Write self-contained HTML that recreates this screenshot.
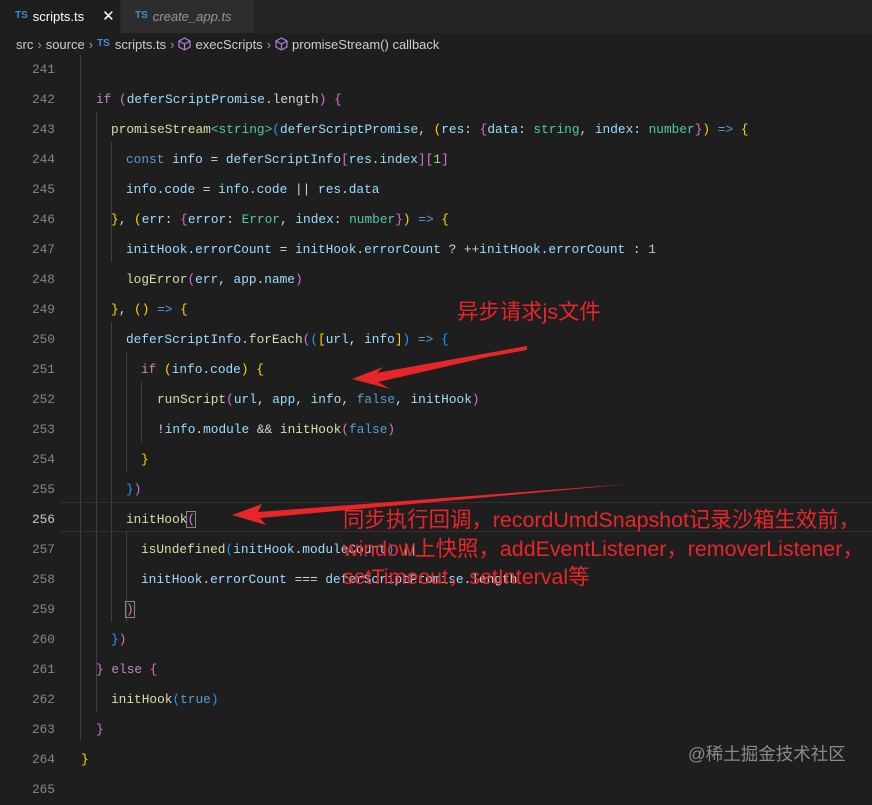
<!DOCTYPE html>
<html><head><meta charset="utf-8"><style>
body{margin:0;width:872px;height:788px;background:#1e1e1e;overflow:hidden;position:relative;font-family:"Liberation Sans","Noto Sans CJK SC",sans-serif}
.tabs{position:absolute;left:0;top:0;width:872px;height:33px;background:#252526}
.tab{position:absolute;top:0;height:33px;line-height:32px;font-size:13px}
.ts{color:#3b8ed8;font-size:10px;font-weight:bold;vertical-align:3px;margin-right:5px}
.bc{position:absolute;top:34px;left:16px;height:22px;line-height:20px;font-size:13px;color:#cccccc}
.bc .sep{color:#999;margin:0 4px}
.cube{display:inline-block;vertical-align:-2px;margin-right:4px}
.code{position:absolute;left:0;top:55px;width:872px}
.ln{position:absolute;left:0;width:55px;text-align:right;color:#858585;font-family:"Liberation Mono",monospace;font-size:12.8px}
.l{position:absolute;height:30px;line-height:30px;font-family:"Liberation Mono",monospace;font-size:12.8px;color:#d4d4d4;white-space:pre}
.k{color:#c586c0}.b{color:#569cd6}.f{color:#dcdcaa}.v{color:#9cdcfe}.t{color:#4ec9b0}.n{color:#b5cea8}
.p1{color:#ffd700}.p2{color:#da70d6}.p3{color:#179fff}
.g{position:absolute;width:1px;background:#404040}
.ann{position:absolute;color:#e8262a;font-size:21.4px;white-space:nowrap;font-family:"Liberation Sans","Noto Sans CJK SC",sans-serif}
</style></head><body>
<div class="tabs">
 <div class="tab" style="left:0;width:120px;background:#1e1e1e;color:#fff;padding-left:15px;box-sizing:border-box"><span class="ts">TS</span>scripts.ts<span style="margin-left:18px;font-size:15px">✕</span></div>
 <div class="tab" style="left:121px;width:133px;background:#2d2d2d;color:#969696;padding-left:14px;box-sizing:border-box;font-style:italic"><span class="ts" style="font-style:normal">TS</span>create_app.ts</div>
</div>
<div class="bc">src<span class="sep">›</span>source<span class="sep">›</span><span class="ts">TS</span>scripts.ts<span class="sep">›</span><svg class="cube" width="13" height="14" viewBox="0 0 13 14"><path d="M6.5 1 L12 4 L12 10 L6.5 13 L1 10 L1 4 Z M1 4 L6.5 7 L12 4 M6.5 7 L6.5 13" fill="none" stroke="#b180d7" stroke-width="1.2"/></svg>execScripts<span class="sep">›</span><svg class="cube" width="13" height="14" viewBox="0 0 13 14"><path d="M6.5 1 L12 4 L12 10 L6.5 13 L1 10 L1 4 Z M1 4 L6.5 7 L12 4 M6.5 7 L6.5 13" fill="none" stroke="#b180d7" stroke-width="1.2"/></svg>promiseStream() callback</div>

<div class="g" style="left:80px;top:55px;height:685px"></div>
<div class="g" style="left:96px;top:112px;height:600px"></div>
<div class="g" style="left:111px;top:142px;height:90px"></div>
<div class="g" style="left:111px;top:232px;height:30px"></div>
<div class="g" style="left:111px;top:322px;height:300px"></div>
<div class="g" style="left:126px;top:352px;height:120px"></div>
<div class="g" style="left:141px;top:382px;height:60px"></div>
<div class="g" style="left:126px;top:532px;height:90px"></div>
<div style="position:absolute;left:60px;top:502px;width:812px;height:28px;border-top:1px solid #303030;border-bottom:1px solid #303030"></div>

<div class="code">
<div class="ln" style="top:0;line-height:30px">241</div>
<div class="ln" style="top:30px;line-height:30px">242</div><div class="l" style="left:96px;top:30px"><span class="k">if</span> <span class="p2">(</span><span class="v">deferScriptPromise</span>.length<span class="p2">)</span> <span class="p2">{</span></div>
<div class="ln" style="top:60px;line-height:30px">243</div><div class="l" style="left:111px;top:60px"><span class="f">promiseStream</span><span class="t">&lt;string&gt;</span><span class="p3">(</span><span class="v">deferScriptPromise</span>, <span class="p1">(</span><span class="v">res</span>: <span class="p2">{</span><span class="v">data</span>: <span class="t">string</span>, <span class="v">index</span>: <span class="t">number</span><span class="p2">}</span><span class="p1">)</span> <span class="b">=&gt;</span> <span class="p1">{</span></div>
<div class="ln" style="top:90px;line-height:30px">244</div><div class="l" style="left:126px;top:90px"><span class="b">const</span> <span class="v">info</span> = <span class="v">deferScriptInfo</span><span class="p2">[</span><span class="v">res</span>.<span class="v">index</span><span class="p2">][</span><span class="n">1</span><span class="p2">]</span></div>
<div class="ln" style="top:120px;line-height:30px">245</div><div class="l" style="left:126px;top:120px"><span class="v">info</span>.<span class="v">code</span> = <span class="v">info</span>.<span class="v">code</span> || <span class="v">res</span>.<span class="v">data</span></div>
<div class="ln" style="top:150px;line-height:30px">246</div><div class="l" style="left:111px;top:150px"><span class="p1">}</span>, <span class="p1">(</span><span class="v">err</span>: <span class="p2">{</span><span class="v">error</span>: <span class="t">Error</span>, <span class="v">index</span>: <span class="t">number</span><span class="p2">}</span><span class="p1">)</span> <span class="b">=&gt;</span> <span class="p1">{</span></div>
<div class="ln" style="top:180px;line-height:30px">247</div><div class="l" style="left:126px;top:180px"><span class="v">initHook</span>.<span class="v">errorCount</span> = <span class="v">initHook</span>.<span class="v">errorCount</span> ? ++<span class="v">initHook</span>.<span class="v">errorCount</span> : <span class="n">1</span></div>
<div class="ln" style="top:210px;line-height:30px">248</div><div class="l" style="left:126px;top:210px"><span class="f">logError</span><span class="p2">(</span><span class="v">err</span>, <span class="v">app</span>.<span class="v">name</span><span class="p2">)</span></div>
<div class="ln" style="top:240px;line-height:30px">249</div><div class="l" style="left:111px;top:240px"><span class="p1">}</span>, <span class="p1">()</span> <span class="b">=&gt;</span> <span class="p1">{</span></div>
<div class="ln" style="top:270px;line-height:30px">250</div><div class="l" style="left:126px;top:270px"><span class="v">deferScriptInfo</span>.<span class="f">forEach</span><span class="p2">(</span><span class="p3">(</span><span class="p1">[</span><span class="v">url</span>, <span class="v">info</span><span class="p1">]</span><span class="p3">)</span> <span class="b">=&gt;</span> <span class="p3">{</span></div>
<div class="ln" style="top:300px;line-height:30px">251</div><div class="l" style="left:141px;top:300px"><span class="k">if</span> <span class="p1">(</span><span class="v">info</span>.<span class="v">code</span><span class="p1">)</span> <span class="p1">{</span></div>
<div class="ln" style="top:330px;line-height:30px">252</div><div class="l" style="left:157px;top:330px"><span class="f">runScript</span><span class="p2">(</span><span class="v">url</span>, <span class="v">app</span>, <span class="v">info</span>, <span class="b">false</span>, <span class="v">initHook</span><span class="p2">)</span></div>
<div class="ln" style="top:360px;line-height:30px">253</div><div class="l" style="left:157px;top:360px">!<span class="v">info</span>.<span class="v">module</span> &amp;&amp; <span class="f">initHook</span><span class="p2">(</span><span class="b">false</span><span class="p2">)</span></div>
<div class="ln" style="top:390px;line-height:30px">254</div><div class="l" style="left:141px;top:390px"><span class="p1">}</span></div>
<div class="ln" style="top:420px;line-height:30px">255</div><div class="l" style="left:126px;top:420px"><span class="p3">}</span><span class="p2">)</span></div>
<div class="ln" style="top:450px;line-height:30px;color:#c6c6c6">256</div><div class="l" style="left:126px;top:450px"><span class="f">initHook</span><span class="p2" style="outline:1px solid #888">(</span></div>
<div class="ln" style="top:480px;line-height:30px">257</div><div class="l" style="left:141px;top:480px"><span class="f">isUndefined</span><span class="p3">(</span><span class="v">initHook</span>.<span class="v">moduleCount</span><span class="p3">)</span> ||</div>
<div class="ln" style="top:510px;line-height:30px">258</div><div class="l" style="left:141px;top:510px"><span class="v">initHook</span>.<span class="v">errorCount</span> === <span class="v">deferScriptPromise</span>.length</div>
<div class="ln" style="top:540px;line-height:30px">259</div><div class="l" style="left:126px;top:540px"><span class="p2" style="outline:1px solid #888">)</span></div>
<div class="ln" style="top:570px;line-height:30px">260</div><div class="l" style="left:111px;top:570px"><span class="p3">}</span><span class="p2">)</span></div>
<div class="ln" style="top:600px;line-height:30px">261</div><div class="l" style="left:96px;top:600px"><span class="p2">}</span> <span class="k">else</span> <span class="p2">{</span></div>
<div class="ln" style="top:630px;line-height:30px">262</div><div class="l" style="left:111px;top:630px"><span class="f">initHook</span><span class="p3">(</span><span class="b">true</span><span class="p3">)</span></div>
<div class="ln" style="top:660px;line-height:30px">263</div><div class="l" style="left:96px;top:660px"><span class="p2">}</span></div>
<div class="ln" style="top:690px;line-height:30px">264</div><div class="l" style="left:81px;top:690px"><span class="p1">}</span></div>
<div class="ln" style="top:720px;line-height:30px">265</div>
</div>

<svg style="position:absolute;left:0;top:0" width="872" height="788">
 <path d="M527 348 L375 375 L383 367 L352 379 L390 389 L378 382 Z" fill="#e8262a"/>
 <path d="M527 346 L527 350 L376 377 L376 373 Z" fill="#e8262a"/>
 <path d="M630 484 L258 512 L262 504 L232 515 L266 525 L260 518 Z" fill="#e8262a"/>
</svg>
<div class="ann" style="left:457px;top:295px">异步请求js文件</div>
<div class="ann" style="left:343px;top:506px;line-height:28.5px">同步执行回调，recordUmdSnapshot记录沙箱生效前，<br>window上快照，addEventListener，removerListener，<br>setTimeout，setInterval等</div>
<div style="position:absolute;left:688px;top:741px;color:#8a8a8a;font-size:17.5px">@稀土掘金技术社区</div>
</body></html>
